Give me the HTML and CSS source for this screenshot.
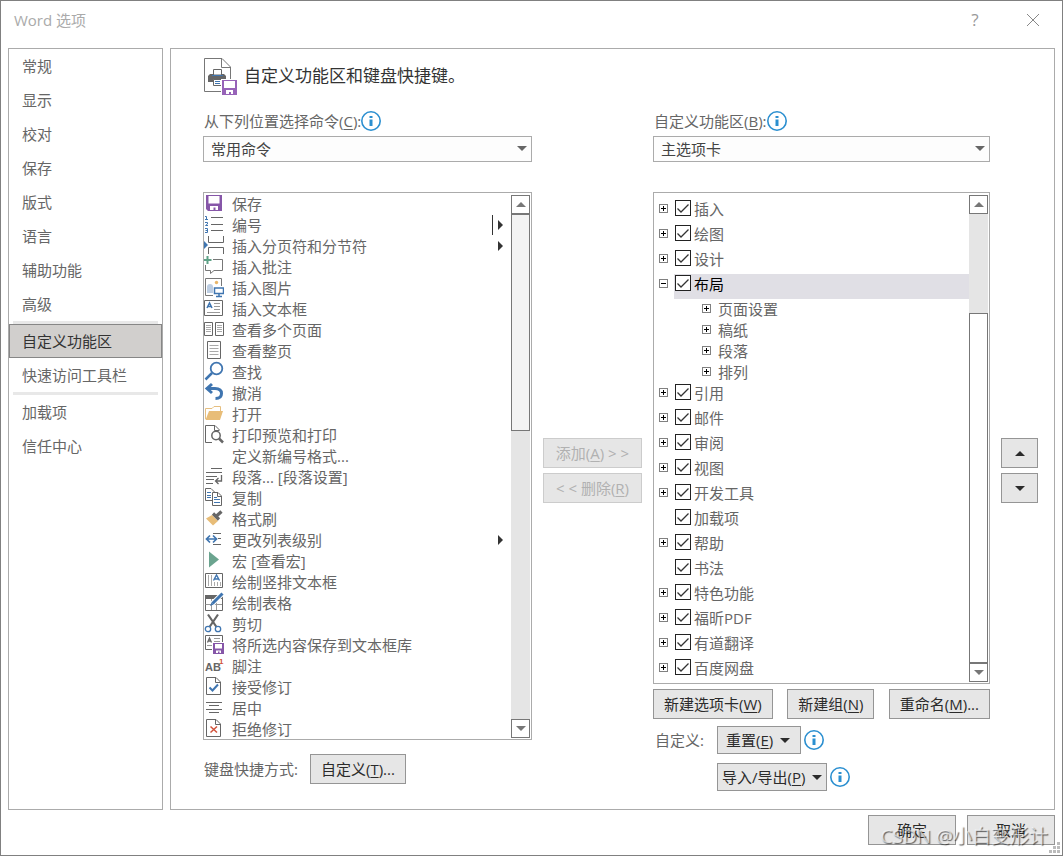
FILE: index.html
```
<!DOCTYPE html>
<html lang="zh-CN">
<head>
    <meta charset="UTF-8">
    <meta name="viewport" content="width=device-width, initial-scale=1.0">
    <title>Word 选项</title>
    <link rel="stylesheet" href="styles.css">
</head>
<body>
    <div class="dialog">
        <header class="titlebar">
            <h1>Word 选项</h1>
            <button class="title-btn" aria-label="帮助">?</button>
            <button class="title-btn" aria-label="关闭">
                <svg width="14" height="14" viewBox="0 0 14 14"><path d="M1 1L13 13M13 1L1 13" stroke="#888" fill="none"/></svg>
            </button>
        </header>

        <div class="content">
            <nav class="sidebar">
                <button>常规</button>
                <button>显示</button>
                <button>校对</button>
                <button>保存</button>
                <button>版式</button>
                <button>语言</button>
                <button>辅助功能</button>
                <button>高级</button>
                <hr>
                <button class="active">自定义功能区</button>
                <button>快速访问工具栏</button>
                <hr>
                <button>加载项</button>
                <button>信任中心</button>
            </nav>

            <main class="panel">
                <div class="panel-title">
                    <svg width="34" height="39" viewBox="0 0 34 39">
                        <path d="M.5 .5H18L26.500 9V33.500H.5Z" fill="#fff" stroke="#777"/>
                        <path d="M17.500 .5V9.500H26.500" fill="none" stroke="#777"/>
                        <path d="M4 18L6 16H9V18H18V16H20L22 18V24H4Z" fill="#666"/>
                        <path d="M9.500 17V11.500H17.500V17Z" fill="#fff" stroke="#666"/>
                        <path d="M8 17.500H19" stroke="#3f75b0"/>
                        <path d="M9.500 21.500H17.500V27.500H9.500Z" fill="#fff" stroke="#666"/>
                        <path d="M11 23.500H16M11 25.500H16" stroke="#3f75b0"/>
                        <path d="M17 21H34V38H17Z" fill="#fff"/>
                        <path d="M18 22H33V37H18Z" fill="#9763b8"/>
                        <path d="M20 23H31V30H20ZM22 32H29V36H27V34H25V36H22Z" fill="#fff"/>
                    </svg>
                    <h2>自定义功能区和键盘快捷键。</h2>
                </div>

                <div class="columns">
                    <section class="column">
                        <div class="field-label">
                            <label for="source">从下列位置选择命令(<u>C</u>):</label>
                            <svg class="info" viewBox="0 0 20 20"><circle cx="10" cy="10" r="9.200"/><path d="M8.500 5H11.500V7H8.500ZM8.500 8.500H11.500V15H8.500Z"/></svg>
                        </div>
                        <div class="select">
                            <select id="source"><option>常用命令</option></select>
                        </div>
                        <div class="listbox">
                            <ul class="commands">
                                <li>
                                    <svg class="icon" viewBox="0 0 20 21"><path d="M2 2H18V18H4L2 16Z" fill="#8656a8"/><path d="M4.500 3H15.500V10.500H4.500ZM6 13H14V17H11.500V14.500H9.500V17H6Z" fill="#fff"/></svg>
                                    <span>保存</span>
                                </li>
                                <li>
                                    <svg class="icon" viewBox="0 0 20 21"><path d="M7 3.500H19M7 10.500H19M7 16.500H19" stroke="#666"/><path d="M1 2.500H2.500V5.500M1 5.500H4M1 8.500H3.500V10L1.500 11.500H4M1 14.500H3.500V18.500H1M1.500 16.500H3.500" stroke="#3f75b0" fill="none"/></svg>
                                    <span>编号</span>
                                    <i class="flyout split"></i>
                                </li>
                                <li>
                                    <svg class="icon" viewBox="0 0 20 21"><path d="M0 6L4 10L0 14Z" fill="#3f75b0"/><path d="M4.500 1V7.500H19.500V1M4.500 19V12.500H19.500V19" stroke="#666" fill="none"/></svg>
                                    <span>插入分页符和分节符</span>
                                    <i class="flyout"></i>
                                </li>
                                <li>
                                    <svg class="icon" viewBox="0 0 20 21"><path d="M9 3.500H18.500V14.500H10L6.500 17.500V14.500H1.500V9" stroke="#777" fill="none"/><path d="M3.500 0V8M0 4H7.500" stroke="#5fa287" stroke-width="2"/></svg>
                                    <span>插入批注</span>
                                </li>
                                <li>
                                    <svg class="icon" viewBox="0 0 20 21"><path d="M1.500 1.500H17.500V18.500H1.500Z" fill="#fff" stroke="#777"/><circle cx="12.500" cy="5.500" r="1.700" fill="#e8b66a"/><path d="M3 16V10Q3 7 6 7Q9 7 9 10V16Z" fill="#bccde2"/><path d="M9 9H20V20H9Z" fill="#fff"/><path d="M10.500 11H19.500V16.500H10.500ZM15 17V20M12 19.500H18" fill="#fff" stroke="#3f75b0" stroke-width="1.500"/></svg>
                                    <span>插入图片</span>
                                </li>
                                <li>
                                    <svg class="icon" viewBox="0 0 20 21"><path d="M.5 2.500H18.500V17.500H.5Z" stroke="#666" fill="#fff"/><path d="M3 10L5.500 5L8 10M4 8.500H7" stroke="#3f75b0" stroke-width="1.500" fill="none"/><path d="M10 5.500H16M10 8.500H16M10 11.500H16M3 14.500H16" stroke="#999"/></svg>
                                    <span>插入文本框</span>
                                </li>
                                <li>
                                    <svg class="icon" viewBox="0 0 20 21"><path d="M.5 3.500H8.500V16.500H.5ZM11.500 3.500H19.500V16.500H11.500Z" stroke="#666" fill="#fff"/><path d="M2 6.500H7M2 8.500H7M2 10.500H7M2 12.500H7M13 6.500H18M13 8.500H18M13 10.500H18M13 12.500H18" stroke="#aaa"/></svg>
                                    <span>查看多个页面</span>
                                </li>
                                <li>
                                    <svg class="icon" viewBox="0 0 20 21"><path d="M3.500 1.500H16.500V18.500H3.500Z" stroke="#666" fill="#fff"/><path d="M5.500 5.500H14.500M5.500 8.500H14.500M5.500 11.500H14.500M5.500 14.500H14.500" stroke="#aaa"/></svg>
                                    <span>查看整页</span>
                                </li>
                                <li>
                                    <svg class="icon" viewBox="0 0 20 21"><circle cx="12.500" cy="7.500" r="5.800" stroke="#3f75b0" stroke-width="1.800" fill="none"/><path d="M8 12L1.500 18.500" stroke="#3f75b0" stroke-width="2.500"/></svg>
                                    <span>查找</span>
                                </li>
                                <li>
                                    <svg class="icon" viewBox="0 0 20 21"><path d="M3 6.500H11Q17.500 6.500 17.500 11.500Q17.500 16.500 11.500 16.500" stroke="#3f75b0" stroke-width="3" fill="none"/><path d="M8 2L3 6.500L8 11" stroke="#3f75b0" stroke-width="3" fill="none"/></svg>
                                    <span>撤消</span>
                                </li>
                                <li>
                                    <svg class="icon" viewBox="0 0 20 21"><path d="M1.500 16V5.500H8L10 3.500H16.500V8" stroke="#e6bf80" fill="#fff"/><path d="M5 8H19L16 17H1.500Z" fill="#e8bd78"/></svg>
                                    <span>打开</span>
                                </li>
                                <li>
                                    <svg class="icon" viewBox="0 0 20 21"><path d="M8 18.500H1.500V1.500H11L15.500 6M10.500 1.500V6.500H15.500" stroke="#666" fill="none"/><circle cx="12" cy="11.500" r="4.200" stroke="#666" stroke-width="1.500" fill="#fff"/><path d="M15 14.500L19 18.500" stroke="#666" stroke-width="2.500"/></svg>
                                    <span>打印预览和打印</span>
                                </li>
                                <li>
                                    <span class="icon"></span>
                                    <span>定义新编号格式...</span>
                                </li>
                                <li>
                                    <svg class="icon" viewBox="0 0 20 21"><path d="M7 2.500H18M2 6.500H18M2 10.500H13M2 13.500H10M2 17.500H9" stroke="#666"/><path d="M17.500 9V15H12M14.500 12L11.500 15L14.500 18" stroke="#666" stroke-width="1.300" fill="none"/></svg>
                                    <span>段落... [段落设置]</span>
                                </li>
                                <li>
                                    <svg class="icon" viewBox="0 0 20 21"><path d="M1.500 1.500H7L10.500 5V13.500H1.500Z" stroke="#666" fill="#fff"/><path d="M3 5.500H7M3 8.500H7M3 10.500H7" stroke="#3f75b0"/><path d="M8.500 5.500H14L17.500 9V18.500H8.500ZM13.500 5.500V9.500H17.500" stroke="#666" fill="#fff"/><path d="M10 10.500H13M10 12.500H16M10 15.500H16" stroke="#3f75b0"/></svg>
                                    <span>复制</span>
                                </li>
                                <li>
                                    <svg class="icon" viewBox="0 0 20 21"><path d="M2 10.500L8 7L14 13L9 17.500Z" fill="#e8bd78"/><path d="M9 5.500L15 11.500" stroke="#666" stroke-width="3.200"/><path d="M12.500 8L17.500 3.500" stroke="#666" stroke-width="3.200"/></svg>
                                    <span>格式刷</span>
                                </li>
                                <li>
                                    <svg class="icon" viewBox="0 0 20 21"><path d="M9 4.500H17M14 9.500H17M9 15.500H17" stroke="#666"/><path d="M3 10H12M6 6.500L2.500 10L6 13.500M9 6.500L12.500 10L9 13.500" stroke="#3f75b0" stroke-width="1.700" fill="none"/></svg>
                                    <span>更改列表级别</span>
                                    <i class="flyout"></i>
                                </li>
                                <li>
                                    <svg class="icon" viewBox="0 0 20 21"><path d="M5 1.500L15 9.500L5 17.500Z" fill="#6ba48f"/></svg>
                                    <span>宏 [查看宏]</span>
                                </li>
                                <li>
                                    <svg class="icon" viewBox="0 0 20 21"><path d="M1.500 2.500H18.500V16.500H1.500Z" stroke="#666" fill="#fff"/><path d="M4.500 4V15M7.500 4V15M10.500 11V15M13.500 11V15M16.500 11V15" stroke="#aaa"/><path d="M9.500 9.500L12.500 4L15.500 9.500M10.500 8H14.500" stroke="#3f75b0" stroke-width="1.400" fill="none"/></svg>
                                    <span>绘制竖排文本框</span>
                                </li>
                                <li>
                                    <svg class="icon" viewBox="0 0 20 21"><path d="M1.500 3.500H18.500V18.500H1.500Z" stroke="#666" fill="#fff"/><path d="M1 3H18V7H1Z" fill="#666"/><path d="M1.500 12.500H18M7.500 7V18M12.500 7V18" stroke="#999"/><path d="M8 12L18 2" stroke="#fff" stroke-width="5"/><path d="M8.500 11.500L18.500 1.500" stroke="#3f75b0" stroke-width="3"/><path d="M6 14L7.500 10.500L9.500 12.500Z" fill="#3f75b0"/></svg>
                                    <span>绘制表格</span>
                                </li>
                                <li>
                                    <svg class="icon" viewBox="0 0 20 21"><path d="M4 1.500L12.500 14M14 1.500L5.500 14" stroke="#666" stroke-width="2.200"/><circle cx="4" cy="16" r="2.700" stroke="#3f75b0" stroke-width="1.300" fill="#fff"/><circle cx="14" cy="16" r="2.700" stroke="#3f75b0" stroke-width="1.300" fill="#fff"/></svg>
                                    <span>剪切</span>
                                </li>
                                <li>
                                    <svg class="icon" viewBox="0 0 20 21"><path d="M1.500 1.500H18.500V15.500H1.500Z" stroke="#666" fill="#fff"/><path d="M3.500 8.500L5.500 4L7.500 8.500M4 7H7" stroke="#666" stroke-width="1.300" fill="none"/><path d="M10 4.500H16M10 7.500H16M3 11.500H8" stroke="#999"/><path d="M8 8H20V20H8Z" fill="#fff"/><path d="M9 9H20V20H9Z" fill="#8656a8"/><path d="M11 10H18V14.500H11ZM12 16.500H17V19H15.500V17.500H14V19H12Z" fill="#fff"/></svg>
                                    <span>将所选内容保存到文本框库</span>
                                </li>
                                <li>
                                    <svg class="icon" viewBox="0 0 20 21"><text class="note-ab" x="1" y="16">AB</text><text class="note-no" x="15" y="9">1</text></svg>
                                    <span>脚注</span>
                                </li>
                                <li>
                                    <svg class="icon" viewBox="0 0 20 21"><path d="M2.500 1.500H12L16.500 6V18.500H2.500ZM11.500 1.500V6.500H16.500" stroke="#666" fill="#fff"/><path d="M5.500 11.500L8.500 14.500L14 8.500" stroke="#3f75b0" stroke-width="2" fill="none"/></svg>
                                    <span>接受修订</span>
                                </li>
                                <li>
                                    <svg class="icon" viewBox="0 0 20 21"><path d="M2 5.500H18M5 8.500H15M2 12.500H18M5 15.500H15" stroke="#666"/></svg>
                                    <span>居中</span>
                                </li>
                                <li>
                                    <svg class="icon" viewBox="0 0 20 21"><path d="M2.500 1.500H12L16.500 6V18.500H2.500ZM11.500 1.500V6.500H16.500" stroke="#666" fill="#fff"/><path d="M6.500 8.500L13 14.500M13 8.500L6.500 14.500" stroke="#d2533c" stroke-width="1.500" fill="none"/></svg>
                                    <span>拒绝修订</span>
                                </li>
                            </ul>
                            <div class="scrollbar">
                                <button class="scroll-btn" aria-label="向上滚动"><i class="tri up"></i></button>
                                <div class="track"><div class="thumb"></div></div>
                                <button class="scroll-btn" aria-label="向下滚动"><i class="tri down"></i></button>
                            </div>
                        </div>
                        <div class="shortcut-row">
                            <span>键盘快捷方式:</span>
                            <button class="btn">自定义(<u>T</u>)...</button>
                        </div>
                    </section>

                    <div class="side-buttons">
                        <button class="btn" disabled>添加(<u>A</u>) &gt; &gt;</button>
                        <button class="btn" disabled>&lt; &lt; 删除(<u>R</u>)</button>
                    </div>

                    <section class="column">
                        <div class="field-label">
                            <label for="target">自定义功能区(<u>B</u>):</label>
                            <svg class="info" viewBox="0 0 20 20"><circle cx="10" cy="10" r="9.200"/><path d="M8.500 5H11.500V7H8.500ZM8.500 8.500H11.500V15H8.500Z"/></svg>
                        </div>
                        <div class="select">
                            <select id="target"><option>主选项卡</option></select>
                        </div>
                        <div class="listbox">
                            <ul class="tree">
                                <li><button class="expander" aria-label="展开"></button><label><input type="checkbox" checked>插入</label></li>
                                <li><button class="expander" aria-label="展开"></button><label><input type="checkbox" checked>绘图</label></li>
                                <li><button class="expander" aria-label="展开"></button><label><input type="checkbox" checked>设计</label></li>
                                <li class="selected"><button class="expander open" aria-label="折叠"></button><label><input type="checkbox" checked>布局</label></li>
                                <li class="child"><button class="expander" aria-label="展开"></button><span>页面设置</span></li>
                                <li class="child"><button class="expander" aria-label="展开"></button><span>稿纸</span></li>
                                <li class="child"><button class="expander" aria-label="展开"></button><span>段落</span></li>
                                <li class="child"><button class="expander" aria-label="展开"></button><span>排列</span></li>
                                <li><button class="expander" aria-label="展开"></button><label><input type="checkbox" checked>引用</label></li>
                                <li><button class="expander" aria-label="展开"></button><label><input type="checkbox" checked>邮件</label></li>
                                <li><button class="expander" aria-label="展开"></button><label><input type="checkbox" checked>审阅</label></li>
                                <li><button class="expander" aria-label="展开"></button><label><input type="checkbox" checked>视图</label></li>
                                <li><button class="expander" aria-label="展开"></button><label><input type="checkbox" checked>开发工具</label></li>
                                <li class="leaf"><label><input type="checkbox" checked>加载项</label></li>
                                <li><button class="expander" aria-label="展开"></button><label><input type="checkbox" checked>帮助</label></li>
                                <li class="leaf"><label><input type="checkbox" checked>书法</label></li>
                                <li><button class="expander" aria-label="展开"></button><label><input type="checkbox" checked>特色功能</label></li>
                                <li><button class="expander" aria-label="展开"></button><label><input type="checkbox" checked>福昕PDF</label></li>
                                <li><button class="expander" aria-label="展开"></button><label><input type="checkbox" checked>有道翻译</label></li>
                                <li><button class="expander" aria-label="展开"></button><label><input type="checkbox" checked>百度网盘</label></li>
                            </ul>
                            <div class="scrollbar at-end">
                                <button class="scroll-btn" aria-label="向上滚动"><i class="tri up"></i></button>
                                <div class="track"><div class="thumb"></div></div>
                                <button class="scroll-btn" aria-label="向下滚动"><i class="tri down"></i></button>
                            </div>
                        </div>
                        <div class="tab-buttons">
                            <button class="btn">新建选项卡(<u>W</u>)</button>
                            <button class="btn">新建组(<u>N</u>)</button>
                            <button class="btn">重命名(<u>M</u>)...</button>
                        </div>
                        <div class="custom-grid">
                            <span>自定义:</span>
                            <div class="custom-item">
                                <button class="btn menu-btn reset"><span>重置(<u>E</u>)</span><i class="tri down"></i></button>
                                <svg class="info" viewBox="0 0 20 20"><circle cx="10" cy="10" r="9.200"/><path d="M8.500 5H11.500V7H8.500ZM8.500 8.500H11.500V15H8.500Z"/></svg>
                            </div>
                            <div class="custom-item second">
                                <button class="btn menu-btn"><span>导入/导出(<u>P</u>)</span><i class="tri down"></i></button>
                                <svg class="info" viewBox="0 0 20 20"><circle cx="10" cy="10" r="9.200"/><path d="M8.500 5H11.500V7H8.500ZM8.500 8.500H11.500V15H8.500Z"/></svg>
                            </div>
                        </div>
                    </section>

                    <div class="side-buttons">
                        <button class="btn" aria-label="上移"><i class="tri up"></i></button>
                        <button class="btn" aria-label="下移"><i class="tri down"></i></button>
                    </div>
                </div>
            </main>
        </div>

        <footer class="footer">
            <button class="btn">确定</button>
            <button class="btn">取消</button>
        </footer>

        <div class="watermark">CSDN @小白变形计</div>
        <svg class="grip" width="11" height="11" viewBox="0 0 11 11"><path d="M8 0H11V3H8ZM4 4H7V7H4ZM8 4H11V7H8ZM0 8H3V11H0ZM4 8H7V11H4ZM8 8H11V11H8Z" fill="#bbb"/></svg>
    </div>
</body>
</html>
```
FILE: styles.css
```
* {
    box-sizing: border-box;
}

body {
    margin: 0;
    font-family: "Open Sans", "Noto Sans CJK SC", sans-serif;
    font-size: 15px;
    font-weight: 400;
    line-height: 20px;
    color: #666;
    background: #fff;
}

button,
select {
    font: inherit;
    color: inherit;
    border-radius: 0;
}

ul {
    list-style: none;
    margin: 0;
    padding: 0;
}

u {
    text-underline-offset: 2px;
}

.dialog {
    position: relative;
    display: flex;
    flex-direction: column;
    min-height: 100vh;
    border: 1px solid #808080;
}

/* title bar */
.titlebar {
    display: flex;
    align-items: center;
    height: 47px;
    padding: 0 13px 10px;
    color: #aaa;
}

.titlebar h1 {
    flex: 1;
    margin: 0;
    font-size: 15px;
    font-weight: 400;
}

.title-btn {
    display: flex;
    align-items: center;
    justify-content: center;
    width: 32px;
    height: 32px;
    margin-left: 26px;
    padding: 0;
    border: none;
    background: none;
    font-size: 17px;
    color: #999;
}

.content {
    flex: 1;
    display: flex;
    gap: 7px;
    padding: 0 7px;
}

/* left navigation */
.sidebar {
    width: 155px;
    flex-shrink: 0;
    border: 1px solid #ababab;
}

.sidebar button {
    display: block;
    width: 100%;
    height: 34px;
    padding: 0 12px;
    border: 1px solid transparent;
    background: none;
    text-align: left;
}

.sidebar .active {
    border-color: #868686;
    background: #d1cfcd;
    color: #333;
}

.sidebar hr {
    height: 3px;
    margin: 0 4px;
    border: none;
    background: #e8e8e8;
}

/* main panel */
.panel {
    flex: 1;
    min-width: 0;
    padding: 9px 16px 16px 32px;
    border: 1px solid #ababab;
}

.panel-title {
    display: flex;
    gap: 6px;
    height: 52px;
    padding-left: 1px;
}

.panel-title h2 {
    margin: 0;
    font-size: 17px;
    font-weight: 400;
    line-height: 36px;
    color: #333;
}

.columns {
    display: grid;
    grid-template-columns: minmax(0, 329fr) 99px minmax(0, 337fr) 37px;
    gap: 11px;
}

.field-label {
    display: flex;
    align-items: center;
    height: 22px;
    padding-left: 1px;
    margin-bottom: 4px;
}

.info {
    width: 20px;
    height: 20px;
    flex-shrink: 0;
}

.info circle {
    fill: #fff;
    stroke: #2b8fd0;
    stroke-width: 1.6;
}

.info path {
    fill: #2b8fd0;
}

.select {
    position: relative;
    margin-bottom: 30px;
}

.select select {
    display: block;
    appearance: none;
    width: 100%;
    height: 26px;
    padding: 0 24px 0 7px;
    border: 1px solid #ababab;
    background: #fdfdfd;
    color: #444;
}

.select::after {
    content: "";
    position: absolute;
    top: 10px;
    right: 5px;
    border: 5px solid transparent;
    border-top-color: #666;
    border-bottom: none;
    pointer-events: none;
}

.listbox {
    display: flex;
    padding-right: 1px;
    border: 1px solid #ababab;
}

.commands,
.tree {
    flex: 1;
    min-width: 0;
}

.commands li {
    display: flex;
    align-items: center;
    gap: 8px;
    height: 21px;
    padding-right: 8px;
    white-space: nowrap;
}

.icon {
    width: 20px;
    height: 21px;
    flex-shrink: 0;
}

.note-ab {
    font: bold 11px "Liberation Sans", sans-serif;
    fill: #666;
}

.note-no {
    font: bold 8px "Liberation Sans", sans-serif;
    fill: #d2533c;
}

.flyout {
    display: flex;
    align-items: center;
    margin-left: auto;
    height: 20px;
    padding-left: 5px;
}

.flyout::after {
    content: "";
    border: 5px solid transparent;
    border-left-color: #333;
    border-right: none;
}

.flyout.split {
    border-left: 1px solid #333;
}

/* scrollbars */
.scrollbar {
    display: flex;
    flex-direction: column;
    width: 19px;
    padding: 2px 0 1px;
}

.scroll-btn {
    display: flex;
    align-items: center;
    justify-content: center;
    height: 19px;
    padding: 0;
    border: 1px solid #777;
    background: #fff;
    color: #777;
}

.track {
    flex: 1;
    display: flex;
    flex-direction: column;
    background: #e5e5e5;
}

.thumb {
    height: 43%;
    border: 1px solid #777;
    background: #f3f3f3;
}

.at-end .track {
    justify-content: flex-end;
}

.at-end .thumb {
    height: 78%;
    background: #fff;
}

.tri {
    display: inline-block;
    border: 5px solid transparent;
}

.tri.up {
    border-top: none;
    border-bottom-color: currentColor;
}

.tri.down {
    border-bottom: none;
    border-top-color: currentColor;
}

/* ribbon tab tree */
.tree {
    padding-top: 6px;
}

.tree li {
    display: flex;
    align-items: flex-start;
    gap: 6px;
    height: 25px;
    padding-left: 5px;
}

.tree label {
    flex: 1;
    display: flex;
    gap: 3px;
    height: 25px;
    padding-left: 1px;
}

.tree .leaf {
    padding-left: 20px;
}

.tree .child {
    gap: 7px;
    height: 21px;
    padding-left: 48px;
}

.tree .selected label {
    background: #e0dfe5;
    color: #000;
}

.tree input {
    appearance: none;
    width: 16px;
    height: 16px;
    margin: 1px 0 0;
    border: 1px solid #222;
    background: #fff url("data:image/svg+xml,%3Csvg xmlns='http://www.w3.org/2000/svg' viewBox='0 0 14 14'%3E%3Cpath d='M1.5 7.500L5 11L12.500 3.500' fill='none' stroke='%23333' stroke-width='1.300'/%3E%3C/svg%3E") center / 14px no-repeat;
}

.tree input:not(:checked) {
    background-image: none;
}

.expander {
    width: 9px;
    height: 9px;
    flex-shrink: 0;
    margin-top: 5px;
    padding: 0;
    border: 1px solid #808080;
    background:
        linear-gradient(#000, #000) center / 5px 1px no-repeat,
        linear-gradient(#000, #000) center / 1px 5px no-repeat,
        #fff;
}

.expander.open {
    background: linear-gradient(#000, #000) center / 5px 1px no-repeat, #fff;
}

/* buttons */
.btn {
    height: 30px;
    padding: 0 10px;
    border: 1px solid #959595;
    background: #e6e6e6;
    color: #2b2b2b;
    white-space: nowrap;
}

.btn:disabled {
    border-color: #ccc;
    color: #b1b1b1;
}

.side-buttons {
    display: flex;
    flex-direction: column;
    gap: 5px;
    padding-top: 328px;
}

.side-buttons .btn {
    display: flex;
    align-items: center;
    justify-content: center;
    padding: 0;
    white-space: pre;
}

.shortcut-row {
    display: flex;
    align-items: center;
    gap: 12px;
    margin-top: 14px;
    padding-left: 1px;
}

.tab-buttons {
    display: flex;
    justify-content: space-between;
    margin-top: 5px;
}

.custom-grid {
    display: grid;
    grid-template-columns: 62px 1fr;
    align-items: center;
    row-gap: 9px;
    margin-top: 7px;
    padding-left: 2px;
}

.custom-item {
    display: flex;
    align-items: center;
    gap: 3px;
}

.custom-item.second {
    grid-column: 2;
}

.menu-btn {
    display: flex;
    align-items: center;
    gap: 7px;
    height: 28px;
    padding: 0 4px;
}

.menu-btn.reset {
    padding: 0 10px 0 8px;
}

.footer {
    display: flex;
    justify-content: flex-end;
    gap: 11px;
    padding: 5px 7px 10px;
}

.footer .btn {
    width: 88px;
}

.watermark {
    position: absolute;
    right: 14px;
    bottom: 6px;
    font-size: 19px;
    line-height: 26px;
    color: rgba(255, 255, 255, 0.6);
    text-shadow: 1px 1px 1px rgba(0, 0, 0, 0.6);
    pointer-events: none;
}

.grip {
    position: absolute;
    right: 2px;
    bottom: 2px;
}
```
